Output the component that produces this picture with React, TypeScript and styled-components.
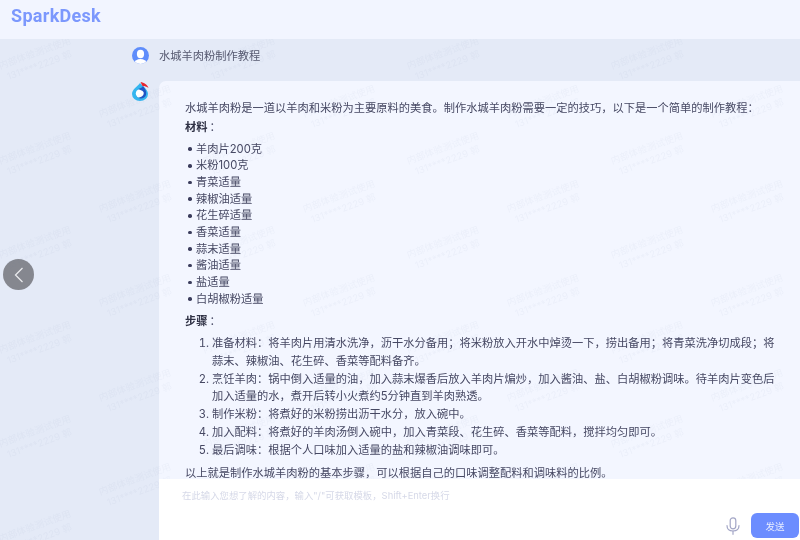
import React from "react";
import styled, { createGlobalStyle } from "styled-components";

const Global = createGlobalStyle`
  html, body { margin: 0; padding: 0; height: 100%; overflow: hidden; }
  body { font-family: Inter, "Noto Sans CJK SC", "Noto Sans", sans-serif; background: #e4eaf7; }
  * { box-sizing: border-box; }
`;
const Page = styled.div`
  position: relative; width: 800px; height: 540px; overflow: hidden;
  display: flex; flex-direction: column;
  background: #e4eaf7;
  filter: blur(0.35px);
`;
const Header = styled.header`
  position: relative; z-index: 2;
  height: 39px; flex: none; display: flex; align-items: center; padding: 0 11px 8px;
  background: #f2f5ff;
`;
const Logo = styled.div`
  font-family: Roboto, sans-serif; font-weight: 700; font-size: 18px; letter-spacing: 0.3px; color: #7c98fd;
`;
const Question = styled.div`
  height: 42px; flex: none; display: flex; align-items: center; gap: 10px; padding: 0 0 10px 132px;
  font-size: 11.25px; color: #55586f;
`;
const Conversation = styled.div`
  flex: 1; min-height: 0; display: flex; padding-left: 132px;
`;
const AvatarColumn = styled.div`
  width: 27px; flex: none;
`;
const Answer = styled.main`
  flex: 1; min-width: 0; display: flex; flex-direction: column;
  background: #f3f6ff; border-top-left-radius: 7px;
`;
const Content = styled.div`
  flex: 1; min-height: 0; overflow: hidden; padding: 19px 20px 0 26px;
  font-size: 11.25px; line-height: 16.65px; color: #464863;
`;
const Paragraph = styled.p<{ $gap?: number }>`
  margin: ${(p) => p.$gap ?? 0}px 0 0;
`;
const Heading = styled.p<{ $gap?: number }>`
  margin: ${(p) => p.$gap ?? 0}px 0 0;
  strong { font-weight: 700; color: #2f3145; margin-right: 2px; }
`;
const Bullets = styled.ul`
  margin: 5.5px 0 0; padding: 0 0 0 3px; list-style: none;
`;
const Bullet = styled.li`
  display: flex; align-items: center; gap: 4.5px;
  &::before { content: ""; width: 3.5px; height: 3.5px; border-radius: 50%; background: #3a3c5c; flex: none; }
`;
const Steps = styled.ol`
  margin: 5.5px 0 0; padding: 0 0 0 27px; line-height: 17.75px;
`;
const Dock = styled.div`
  position: relative; z-index: 2;
  height: 61px; flex: none; background: #fff; display: flex; flex-direction: column;
  padding: 10px 1px 2px 23px;
`;
const Placeholder = styled.div`
  font-size: 9.4px; line-height: 13px; color: #d6d9e8;
`;
const DockActions = styled.div`
  margin-top: auto; display: flex; align-items: center; justify-content: flex-end; gap: 11px;
`;
const SendButton = styled.button`
  width: 48px; height: 25px; border: 0; border-radius: 6px; background: #6c8dff; color: #e6ecff;
  font: 9.5px "Noto Sans CJK SC", sans-serif; padding: 0;
`;
const BackButton = styled.div`
  position: absolute; left: 3px; top: 259px; width: 31px; height: 31px; border-radius: 50%;
  background: #85878f; display: flex; align-items: center; justify-content: center;
`;
const Watermarks = styled.div`
  position: absolute; inset: 0; pointer-events: none; overflow: hidden; z-index: 1;
`;
const Mark = styled.div`
  position: absolute; width: 90px; text-align: center; white-space: nowrap;
  font-size: 9.5px; line-height: 13px; color: rgba(120, 130, 170, 0.06);
  transform: rotate(-20deg);
`;

const ingredients = ["羊肉片200克", "米粉100克", "青菜适量", "辣椒油适量", "花生碎适量", "香菜适量", "蒜末适量", "酱油适量", "盐适量", "白胡椒粉适量"];
const steps = [
  "准备材料：将羊肉片用清水洗净，沥干水分备用；将米粉放入开水中焯烫一下，捞出备用；将青菜洗净切成段；将蒜末、辣椒油、花生碎、香菜等配料备齐。",
  "烹饪羊肉：锅中倒入适量的油，加入蒜末爆香后放入羊肉片煸炒，加入酱油、盐、白胡椒粉调味。待羊肉片变色后加入适量的水，煮开后转小火煮约5分钟直到羊肉熟透。",
  "制作米粉：将煮好的米粉捞出沥干水分，放入碗中。",
  "加入配料：将煮好的羊肉汤倒入碗中，加入青菜段、花生碎、香菜等配料，搅拌均匀即可。",
  "最后调味：根据个人口味加入适量的盐和辣椒油调味即可。",
];
const marks: { x: number; y: number }[] = [];
for (let r = 0; r < 6; r++) {
  for (let c = 0; c < 4; c++) {
    marks.push({ x: c * 204 - 8, y: r * 94.5 + 46 });
    if (r < 5) marks.push({ x: c * 204 + 92, y: r * 94.5 + 94 });
  }
}

export default function App() {
  return (
    <Page>
      <Global />
      <Header><Logo>SparkDesk</Logo></Header>
      <Question>
        <svg width="17" height="17" viewBox="0 0 17 17">
          <circle cx="8.5" cy="8.5" r="8.5" fill="#5f8dfb" />
          <clipPath id="c"><circle cx="8.5" cy="8.5" r="8.5" /></clipPath>
          <g clipPath="url(#c)" fill="#fff">
            <ellipse cx="8.5" cy="7" rx="3.6" ry="4.2" />
            <ellipse cx="8.5" cy="16" rx="6" ry="4" />
          </g>
        </svg>
        <span>水城羊肉粉制作教程</span>
      </Question>
      <Conversation>
        <AvatarColumn>
          <svg width="18" height="20" viewBox="0 0 18 20">
            <path d="M8 2 C5 6 0 8.5 0 13 A8 7 0 0 0 16 13 C16 10 14 8 12 6 Z" fill="#35b6ef" />
            <circle cx="8" cy="12.5" r="4.2" fill="#fff" />
            <path d="M6 8 C8 7 10 7 11 5 C13 8 15 10 14 14 C13 17 10 18 6 17 C10 16 12.5 14 11.5 11 C10 9 8 9 6 8Z" fill="#1f56c4" />
            <path d="M8.5 1 C12 1.5 15.5 3.5 16.5 7 C14.5 5.5 12.5 5 10.5 5 Z" fill="#e5252f" />
          </svg>
        </AvatarColumn>
        <Answer>
          <Content>
            <Paragraph>水城羊肉粉是一道以羊肉和米粉为主要原料的美食。制作水城羊肉粉需要一定的技巧，以下是一个简单的制作教程：</Paragraph>
            <Heading $gap={2}><strong>材料</strong>：</Heading>
            <Bullets>{ingredients.map((t) => <Bullet key={t}>{t}</Bullet>)}</Bullets>
            <Heading $gap={5.5}><strong>步骤</strong>：</Heading>
            <Steps>{steps.map((t) => <li key={t}>{t}</li>)}</Steps>
            <Paragraph $gap={6}>以上就是制作水城羊肉粉的基本步骤，可以根据自己的口味调整配料和调味料的比例。</Paragraph>
          </Content>
          <Dock>
            <Placeholder>在此输入您想了解的内容，输入"/"可获取模板，Shift+Enter换行</Placeholder>
            <DockActions>
              <svg width="14" height="18" viewBox="0 0 14 18" fill="none" stroke="#a3a6c6" strokeWidth="1.2" strokeLinecap="round">
                <rect x="4.2" y="0.8" width="5.6" height="11" rx="2.8" />
                <path d="M1 8.5 C1 12.5 3.5 14 7 14 C10.5 14 13 12.5 13 8.5" />
                <path d="M7 14 V17.3" />
              </svg>
              <SendButton>发送</SendButton>
            </DockActions>
          </Dock>
        </Answer>
      </Conversation>
      <BackButton>
        <svg width="10" height="16" viewBox="0 0 10 16" fill="none" stroke="#e8e9ec" strokeWidth="1.3">
          <path d="M8.5 1 L1.5 8 L8.5 15" />
        </svg>
      </BackButton>
      <Watermarks>
        {marks.map((m, i) => (
          <Mark key={i} style={{ left: m.x, top: m.y }}>内部体验测试使用<br />131****2229 郭</Mark>
        ))}
      </Watermarks>
    </Page>
  );
}
